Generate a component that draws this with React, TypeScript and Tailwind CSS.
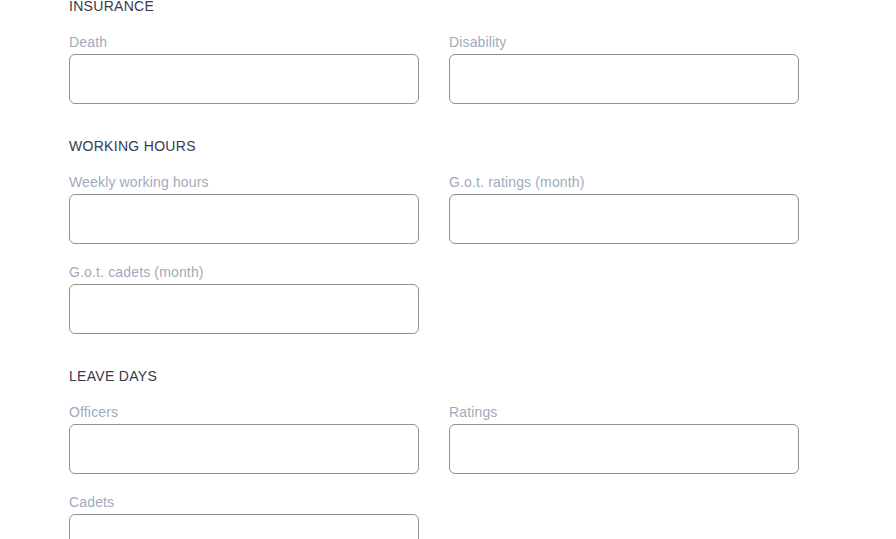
type Field = { label: string };

type Section = { title: string; fields: Field[] };

const SECTIONS: Section[] = [
  { title: "INSURANCE", fields: [{ label: "Death" }, { label: "Disability" }] },
  {
    title: "WORKING HOURS",
    fields: [
      { label: "Weekly working hours" },
      { label: "G.o.t. ratings (month)" },
      { label: "G.o.t. cadets (month)" },
    ],
  },
  {
    title: "LEAVE DAYS",
    fields: [{ label: "Officers" }, { label: "Ratings" }, { label: "Cadets" }],
  },
];

function FormField({ label }: Field) {
  return (
    <label className="flex flex-col">
      <span className="text-sm leading-5 tracking-[0.15px] text-[#a0abbb] mb-0.5">
        {label}
      </span>
      <input
        type="text"
        className="h-[50px] w-full rounded-md border border-[#8f8f8f] bg-white px-3 outline-none"
      />
    </label>
  );
}

export default function App() {
  return (
    <div
      className="min-h-screen bg-white overflow-hidden"
      style={{ fontFamily: '"Liberation Sans", Arial, sans-serif' }}
    >
      <div className="ml-[69px] w-[730px] mt-[-4px] flex flex-col gap-8 pb-10">
        {SECTIONS.map((section) => (
          <section key={section.title} className="flex flex-col gap-4">
            <h2 className="text-sm leading-5 tracking-[0.3px] text-[#343b4e]">
              {section.title}
            </h2>
            <div className="grid grid-cols-2 gap-x-[30px] gap-y-[18px]">
              {section.fields.map((f) => (
                <FormField key={f.label} label={f.label} />
              ))}
            </div>
          </section>
        ))}
      </div>
    </div>
  );
}
